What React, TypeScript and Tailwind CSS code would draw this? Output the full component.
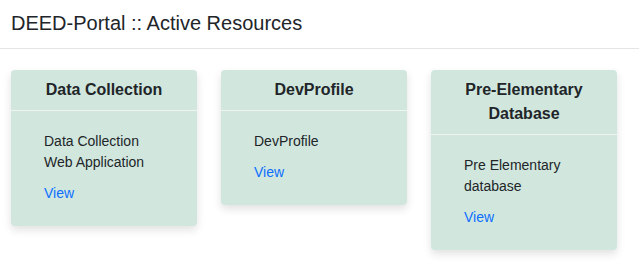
import React from 'react';

const resources = [
  { title: 'Data Collection', description: 'Data Collection Web Application' },
  { title: 'DevProfile', description: 'DevProfile' },
  { title: 'Pre-Elementary Database', description: 'Pre Elementary database' },
];

function ResourceCard({ title, description }: { title: string; description: string }) {
  return (
    <div className="w-[186px] bg-[#d1e7dd] rounded-[4px] shadow-[0_4px_8px_rgba(0,0,0,0.12)]">
      <div className="px-4 py-2 text-center text-base leading-6 font-bold text-[#212529] border-b border-[#eef5f1]">
        {title}
      </div>
      <div className="pl-[33px] pr-[33px] pt-5 pb-[22px] text-sm leading-[21px] text-[#212529]">
        <p>{description}</p>
        <a href="#" className="block mt-[10px] text-[#0d6efd]">View</a>
      </div>
    </div>
  );
}

export default function App() {
  return (
    <div className="min-h-screen bg-white font-['Liberation_Sans',Arial,sans-serif]">
      <header className="h-[49px] border-b border-[#e5e5e5] px-[11px] flex items-center">
        <h1 className="text-[20px] leading-6 text-[#212529] -mt-[3px]">DEED-Portal :: Active Resources</h1>
      </header>
      <div className="flex items-start gap-6 px-[11px] pt-[21px]">
        {resources.map(r => (
          <ResourceCard key={r.title} title={r.title} description={r.description} />
        ))}
      </div>
    </div>
  );
}
